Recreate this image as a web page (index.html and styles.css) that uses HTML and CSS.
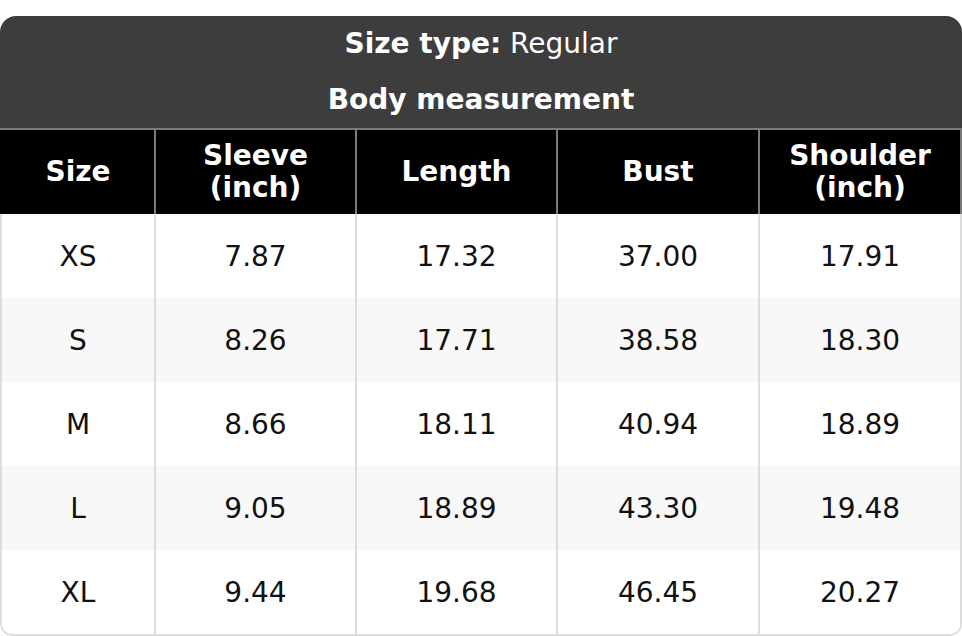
FILE: index.html
```html
<!DOCTYPE html>
<html>
<head>
<meta charset="utf-8">
<link rel="stylesheet" href="styles.css">
</head>
<body>
<div class="chart">
  <div class="title">
    <div class="title-line"><span><b>Size type:</b> Regular</span></div>
    <div class="title-line"><span><b>Body measurement</b></span></div>
  </div>
  <div class="grid head">
    <div class="cell">Size</div>
    <div class="cell">Sleeve (inch)</div>
    <div class="cell">Length</div>
    <div class="cell">Bust</div>
    <div class="cell">Shoulder (inch)</div>
  </div>
  <div class="body">
    <div class="grid row">
      <div class="cell">XS</div><div class="cell">7.87</div><div class="cell">17.32</div><div class="cell">37.00</div><div class="cell">17.91</div>
    </div>
    <div class="grid row alt">
      <div class="cell">S</div><div class="cell">8.26</div><div class="cell">17.71</div><div class="cell">38.58</div><div class="cell">18.30</div>
    </div>
    <div class="grid row">
      <div class="cell">M</div><div class="cell">8.66</div><div class="cell">18.11</div><div class="cell">40.94</div><div class="cell">18.89</div>
    </div>
    <div class="grid row alt">
      <div class="cell">L</div><div class="cell">9.05</div><div class="cell">18.89</div><div class="cell">43.30</div><div class="cell">19.48</div>
    </div>
    <div class="grid row">
      <div class="cell">XL</div><div class="cell">9.44</div><div class="cell">19.68</div><div class="cell">46.45</div><div class="cell">20.27</div>
    </div>
  </div>
</div>
</body>
</html>
```
FILE: styles.css
```css
html, body {
  margin: 0;
  padding: 0;
  background: #ffffff;
}
body {
  font-family: "DejaVu Sans", "Liberation Sans", sans-serif;
  font-size: 28px;
  color: #111111;
}
.chart {
  width: 962px;
  margin-top: 16px;
  border-radius: 16px 16px 12px 12px;
  overflow: hidden;
}
.title {
  background: #3d3d3d;
  color: #ffffff;
  border-bottom: 2px solid #7a7a7a;
}
.title-line {
  height: 56px;
  display: flex;
  align-items: center;
  justify-content: center;
  padding-bottom: 1px;
  box-sizing: border-box;
}
.title-line b {
  font-weight: bold;
}
.grid {
  display: grid;
  grid-template-columns: 152px 201px 201px 202px 202px;
  height: 84px;
}
.cell {
  display: flex;
  align-items: center;
  justify-content: center;
  text-align: center;
  line-height: 32px;
  box-sizing: border-box;
}
.grid .cell + .cell {
  border-left: 2px solid #dddddd;
}
.head {
  background: #000000;
  color: #ffffff;
  font-weight: bold;
  border-left: 2px solid #000000;
  border-right: 2px solid #7a7a7a;
}
.head .cell + .cell {
  border-left-color: #7a7a7a;
}
.head .cell {
  padding: 0 22px;
}
.head .cell:first-child {
  padding: 0;
}
.body {
  border: 2px solid #dddddd;
  border-top: none;
  border-radius: 0 0 12px 12px;
  overflow: hidden;
}
.row {
  background: #ffffff;
}
.row .cell {
  padding-top: 2px;
}
.row.alt {
  background: #f8f8f8;
}
```
